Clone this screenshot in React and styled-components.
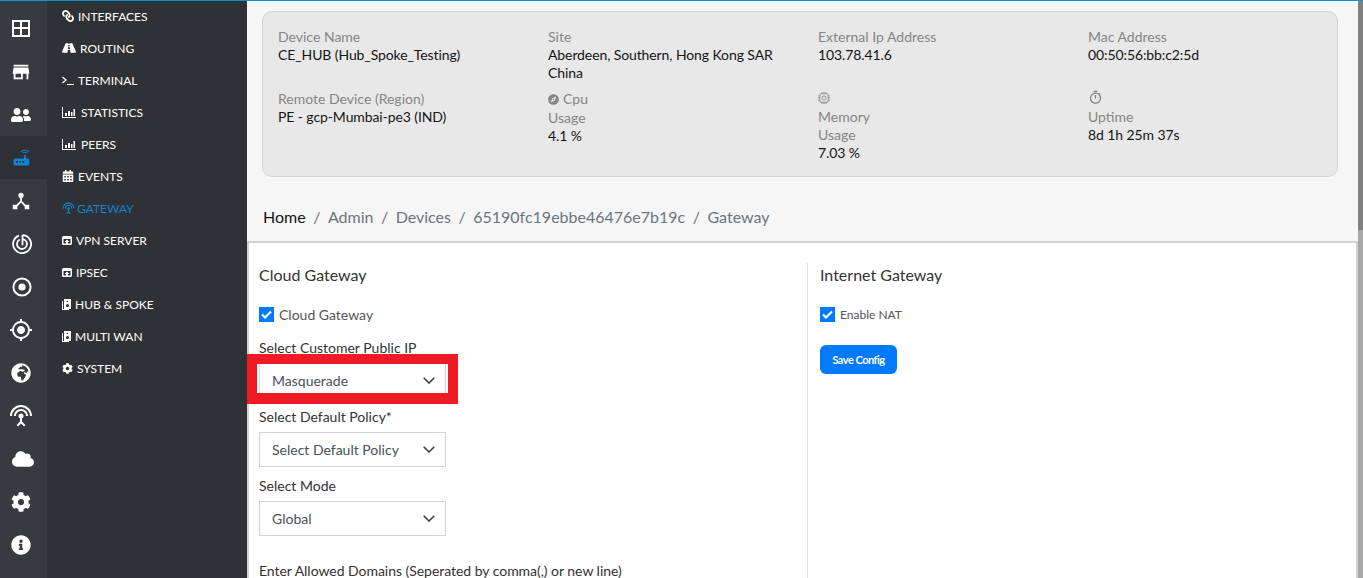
import styled, { createGlobalStyle } from "styled-components";
import {
  FaCalendarAlt,
  FaCloud,
  FaCog,
  FaCompass,
  FaGlobeAfrica,
  FaInfoCircle,
  FaLink,
  FaRoad,
  FaUserFriends,
} from "react-icons/fa";
import {
  MdDeviceHub,
  MdGpsFixed,
  MdOutlineTimer,
  MdRouter,
  MdSettingsInputAntenna,
  MdStore,
} from "react-icons/md";
import { BsCpu } from "react-icons/bs";

const GlobalStyle = createGlobalStyle`
  html, body {
    margin: 0;
    height: 100%;
    overflow: hidden;
    background: #f6f6f6;
    font-family: "Lato", "Liberation Sans", sans-serif;
  }
  * {
    box-sizing: border-box;
  }
`;

const Page = styled.div`
  height: 578px;
  display: flex;
  flex-direction: column;
  overflow: hidden;
`;

const TopLine = styled.div`
  height: 1px;
  flex: none;
  background: #0096d6;
`;

const Shell = styled.div`
  flex: 1;
  display: flex;
  min-height: 0;
`;

const Rail = styled.nav`
  width: 47px;
  flex: none;
  padding-top: 6px;
  background: #383a3f;
`;

const RailItem = styled.div`
  height: 43px;
  padding-right: 5px;
  padding-left: ${(p) => p.$nudge || 0}px;
  display: flex;
  align-items: center;
  justify-content: center;
  color: ${(p) => (p.$active ? "#0b84d2" : "#fff")};
  background: ${(p) => (p.$active ? "#2f3033" : "transparent")};
`;

const NavPanel = styled.nav`
  width: 200px;
  flex: none;
  background: #303134;
`;

const NavItem = styled.div`
  height: 32px;
  padding: 0 0 2px 15px;
  display: flex;
  align-items: center;
  font-size: 12px;
  text-transform: uppercase;
  color: ${(p) => (p.$active ? "#0b84d2" : "#fff")};
`;

const NavIcon = styled.span`
  width: ${(p) => p.$slot}px;
  flex: none;
  display: flex;
  align-items: center;
`;

const FlippedLink = styled(FaLink)`
  transform: scaleX(-1);
`;

const Content = styled.main`
  flex: 1;
  min-width: 0;
  display: flex;
  flex-direction: column;
`;

const DeviceCard = styled.section`
  margin: 10px 20px 0 15px;
  padding: 16px 0 14px 15px;
  height: 166px;
  display: grid;
  grid-template-columns: repeat(4, 270px);
  grid-template-rows: 54px 72px;
  row-gap: 8px;
  background: #e8e8e8;
  border: 1px solid #d2d2d2;
  border-radius: 10px;
  font-size: 14px;
  line-height: 18px;
`;

const InfoCell = styled.div`
  padding-right: 20px;
`;

const InfoLabel = styled.div`
  color: #858585;
`;

const InfoValue = styled.div`
  color: #151515;
  letter-spacing: -0.1px;
`;

const InfoGlyph = styled.span`
  display: ${(p) => (p.$block ? "block" : "inline")};
  height: ${(p) => (p.$block ? "18px" : "auto")};
  margin-right: ${(p) => (p.$block ? "0" : "4px")};
  vertical-align: -1px;
`;

const Breadcrumb = styled.ol`
  list-style: none;
  margin: 31px 0 15px 16px;
  padding: 0;
  display: flex;
  font-size: 16px;
  line-height: 18px;
  color: #6c757d;
`;

const Crumb = styled.li`
  color: ${(p) => (p.$home ? "#151515" : "#6c757d")};

  &:not(:first-child)::before {
    content: "/";
    padding: 0 7.5px;
    color: #6c757d;
  }
`;

const MainPanel = styled.section`
  flex: 1;
  min-height: 0;
  display: flex;
  padding: 20px 0 0 10px;
  background: #fff;
  border: solid #d2d2d2;
  border-width: 2px 2px 0;
`;

const LeftColumn = styled.div`
  width: 549px;
  flex: none;
  border-right: 1px solid #e2e2e2;
`;

const RightColumn = styled.div`
  flex: 1;
  padding-left: 12px;
`;

const SectionTitle = styled.h2`
  margin: 0 0 19px;
  font-size: 16px;
  line-height: 24px;
  font-weight: 400;
  color: #333;
`;

const CheckRow = styled.label`
  height: 16px;
  display: flex;
  align-items: center;
  gap: 5px;
  font-size: ${(p) => (p.$small ? "12px" : "14px")};
  color: #555;
`;

const CheckBox = styled.span`
  width: 15px;
  height: 15px;
  flex: none;
  display: flex;
  align-items: center;
  justify-content: center;
  background: #007bff;
`;

const FieldGroup = styled.div`
  margin-top: 17px;
`;

const Field = styled.div`
  margin-bottom: 10px;
`;

const FieldLabel = styled.div`
  margin-bottom: 6px;
  font-size: 14px;
  line-height: 18px;
  color: #333;
`;

const SelectBox = styled.div`
  position: relative;
  width: 187px;
  height: 35px;
  padding: 0 10px 0 12px;
  display: flex;
  align-items: center;
  justify-content: space-between;
  background: #fff;
  border: 1px solid #ced4da;
  font-size: 14px;
  color: #495057;
`;

const Highlight = styled.div`
  position: absolute;
  top: -10px;
  left: -13px;
  width: 211px;
  height: 50px;
  border: 10px solid #ed1c24;
  border-bottom-width: 11px;
  pointer-events: none;
`;

const DomainsLabel = styled(FieldLabel)`
  margin-top: 26px;
  letter-spacing: -0.035px;
`;

const SaveButton = styled.button`
  display: block;
  width: 77px;
  height: 29px;
  margin-top: 23px;
  padding: 0;
  background: #007bff;
  border: none;
  border-radius: 6px;
  font-family: inherit;
  font-size: 11px;
  font-weight: 700;
  letter-spacing: -0.5px;
  color: #fff;
`;

const ScrollTrack = styled.div`
  width: 5px;
  flex: none;
  background: #a8a8a8;
`;

const ScrollThumb = styled.div`
  height: 229px;
  background: #808080;
`;

const GridIcon = () => (
  <svg width="18" height="17" viewBox="0 0 18 17">
    <path
      fill="#fff"
      fillRule="evenodd"
      d="M0 0h18v17H0zM2 2v5h6V2zM10 2v5h6V2zM2 9v6h6V9zM10 9v6h6V9z"
    />
  </svg>
);

const RadarIcon = () => (
  <svg width="20" height="20" viewBox="0 0 20 20" fill="none" stroke="#fff">
    <path strokeWidth="1.800" d="M11 1.100a9 9 0 1 1-4 .5" />
    <path strokeWidth="1.800" d="M11 5.100a5 5 0 1 1-3.200.4" />
    <path strokeWidth="1.800" strokeLinecap="round" d="M10.500 1.500V10.500" />
  </svg>
);

const RecordIcon = () => (
  <svg width="20" height="20" viewBox="0 0 20 20">
    <circle cx="10" cy="10" r="8.600" fill="none" stroke="#fff" strokeWidth="2" />
    <circle cx="10" cy="10" r="3.600" fill="#fff" />
  </svg>
);

const BarsIcon = () => (
  <svg width="14" height="11" viewBox="0 0 14 11">
    <path fill="#fff" d="M0 0h1v10h13v1H0z" />
    <path fill="#fff" d="M3 6h2v3H3zM6 4h2v5H6zM9 5h1.500v4H9zM11.500 2H13v7h-1.500z" />
  </svg>
);

const TerminalIcon = () => (
  <svg width="12" height="9" viewBox="0 0 12 9" fill="none" stroke="#fff">
    <path strokeWidth="1.300" d="M.5 1l3.500 3-3.500 3" />
    <path strokeWidth="1" d="M5 8.500h7" />
  </svg>
);

const VpnIcon = () => (
  <svg width="10" height="9" viewBox="0 0 10 9">
    <path
      fill="#fff"
      fillRule="evenodd"
      d="M1.500 0h7A1.500 1.500 0 0 1 10 1.500v6A1.500 1.500 0 0 1 8.500 9h-7A1.500 1.500 0 0 1 0 7.500v-6A1.500 1.500 0 0 1 1.500 0zM1.500 3v4.500h2.500V6L2.500 6 5 3.500 7.500 6H6v1.500h2.500V3z"
    />
  </svg>
);

const BookIcon = () => (
  <svg width="9" height="11" viewBox="0 0 9 11">
    <path fill="#fff" d="M0 2h1v8h6v1H0z" />
    <path
      fill="#fff"
      fillRule="evenodd"
      d="M2 0h7v10H2zM4 6.500a1.500 1.500 0 1 0 3 0 1.500 1.500 0 0 0-3 0zM4.800 2.500a.7.7 0 1 0 1.400 0 .7.7 0 0 0-1.400 0z"
    />
  </svg>
);

const CheckMark = () => (
  <svg width="11" height="9" viewBox="0 0 11 9" fill="none">
    <path stroke="#fff" strokeWidth="2.200" d="M1 4.500l3 3 6-6" />
  </svg>
);

const Chevron = () => (
  <svg width="12" height="7" viewBox="0 0 12 7" fill="none">
    <path stroke="#343a40" strokeWidth="1.500" d="M.7.7L6 6l5.300-5.300" />
  </svg>
);

const railIcons = [
  { key: "dashboard", icon: <GridIcon /> },
  { key: "store", icon: <MdStore size={22} /> },
  { key: "users", icon: <FaUserFriends size={20} /> },
  { key: "router", icon: <MdRouter size={21} />, active: true },
  { key: "hub", icon: <MdDeviceHub size={22} /> },
  { key: "radar", icon: <RadarIcon />, nudge: 1 },
  { key: "record", icon: <RecordIcon />, nudge: 1 },
  { key: "gps", icon: <MdGpsFixed size={24} /> },
  { key: "globe", icon: <FaGlobeAfrica size={20} /> },
  { key: "antenna", icon: <MdSettingsInputAntenna size={24} /> },
  { key: "cloud", icon: <FaCloud size={22} />, nudge: 4 },
  { key: "settings", icon: <FaCog size={20} /> },
  { key: "info", icon: <FaInfoCircle size={20} /> },
];

const navItems = [
  { label: "Interfaces", slot: 16, icon: <FlippedLink size={12} /> },
  { label: "Routing", slot: 18, icon: <FaRoad size={14} /> },
  { label: "Terminal", slot: 16, icon: <TerminalIcon /> },
  { label: "Statistics", slot: 19, icon: <BarsIcon /> },
  { label: "Peers", slot: 19, icon: <BarsIcon /> },
  { label: "Events", slot: 16, icon: <FaCalendarAlt size={12} /> },
  { label: "Gateway", slot: 15, icon: <MdSettingsInputAntenna size={13} />, active: true },
  { label: "VPN Server", slot: 14, icon: <VpnIcon /> },
  { label: "IPSec", slot: 14, icon: <VpnIcon /> },
  { label: "Hub & Spoke", slot: 13, icon: <BookIcon /> },
  { label: "Multi WAN", slot: 13, icon: <BookIcon /> },
  { label: "System", slot: 15, icon: <FaCog size={11} /> },
];

const crumbs = ["Home", "Admin", "Devices", "65190fc19ebbe46476e7b19c", "Gateway"];

const selects = [
  { label: "Select Customer Public IP", value: "Masquerade", marked: true },
  { label: "Select Default Policy*", value: "Select Default Policy" },
  { label: "Select Mode", value: "Global" },
];

const App = () => (
  <Page>
    <GlobalStyle />
    <TopLine />
    <Shell>
      <Rail>
        {railIcons.map((item) => (
          <RailItem key={item.key} $active={item.active} $nudge={item.nudge}>
            {item.icon}
          </RailItem>
        ))}
      </Rail>
      <NavPanel>
        {navItems.map((item) => (
          <NavItem key={item.label} $active={item.active}>
            <NavIcon $slot={item.slot}>{item.icon}</NavIcon>
            {item.label}
          </NavItem>
        ))}
      </NavPanel>
      <Content>
        <DeviceCard>
          <InfoCell>
            <InfoLabel>Device Name</InfoLabel>
            <InfoValue>CE_HUB (Hub_Spoke_Testing)</InfoValue>
          </InfoCell>
          <InfoCell>
            <InfoLabel>Site</InfoLabel>
            <InfoValue>Aberdeen, Southern, Hong Kong SAR China</InfoValue>
          </InfoCell>
          <InfoCell>
            <InfoLabel>External Ip Address</InfoLabel>
            <InfoValue>103.78.41.6</InfoValue>
          </InfoCell>
          <InfoCell>
            <InfoLabel>Mac Address</InfoLabel>
            <InfoValue>00:50:56:bb:c2:5d</InfoValue>
          </InfoCell>
          <InfoCell>
            <InfoLabel>Remote Device (Region)</InfoLabel>
            <InfoValue>PE - gcp-Mumbai-pe3 (IND)</InfoValue>
          </InfoCell>
          <InfoCell>
            <InfoLabel>
              <InfoGlyph>
                <FaCompass size={11} />
              </InfoGlyph>
              Cpu
            </InfoLabel>
            <InfoLabel>Usage</InfoLabel>
            <InfoValue>4.1 %</InfoValue>
          </InfoCell>
          <InfoCell>
            <InfoLabel>
              <InfoGlyph $block>
                <BsCpu size={12} />
              </InfoGlyph>
              Memory
            </InfoLabel>
            <InfoLabel>Usage</InfoLabel>
            <InfoValue>7.03 %</InfoValue>
          </InfoCell>
          <InfoCell>
            <InfoLabel>
              <InfoGlyph $block>
                <MdOutlineTimer size={15} />
              </InfoGlyph>
              Uptime
            </InfoLabel>
            <InfoValue>8d 1h 25m 37s</InfoValue>
          </InfoCell>
        </DeviceCard>
        <Breadcrumb>
          {crumbs.map((crumb, index) => (
            <Crumb key={crumb} $home={index === 0}>
              {crumb}
            </Crumb>
          ))}
        </Breadcrumb>
        <MainPanel>
          <LeftColumn>
            <SectionTitle>Cloud Gateway</SectionTitle>
            <CheckRow>
              <CheckBox>
                <CheckMark />
              </CheckBox>
              Cloud Gateway
            </CheckRow>
            <FieldGroup>
              {selects.map((field) => (
                <Field key={field.label}>
                  <FieldLabel>{field.label}</FieldLabel>
                  <SelectBox>
                    {field.value}
                    <Chevron />
                    {field.marked && <Highlight />}
                  </SelectBox>
                </Field>
              ))}
              <DomainsLabel>Enter Allowed Domains (Seperated by comma(,) or new line)</DomainsLabel>
            </FieldGroup>
          </LeftColumn>
          <RightColumn>
            <SectionTitle>Internet Gateway</SectionTitle>
            <CheckRow $small>
              <CheckBox>
                <CheckMark />
              </CheckBox>
              Enable NAT
            </CheckRow>
            <SaveButton>Save Config</SaveButton>
          </RightColumn>
        </MainPanel>
      </Content>
      <ScrollTrack>
        <ScrollThumb />
      </ScrollTrack>
    </Shell>
  </Page>
);

export default App;
